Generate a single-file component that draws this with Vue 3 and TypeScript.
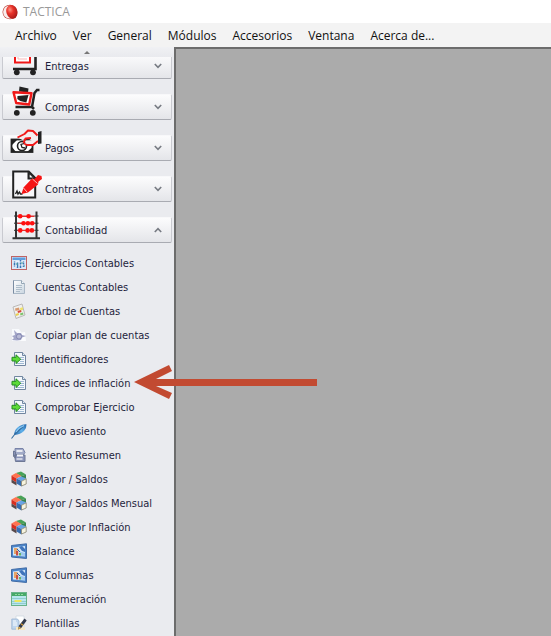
<script setup lang="ts">
interface Entry {
  label: string
  icon: string
}

const menus: string[] = ['Archivo', 'Ver', 'General', 'Módulos', 'Accesorios', 'Ventana', 'Acerca de...']

const groups: Entry[] = [
  { label: 'Entregas', icon: 'trolley' },
  { label: 'Compras', icon: 'cart' },
  { label: 'Pagos', icon: 'payment' },
  { label: 'Contratos', icon: 'contract' },
  { label: 'Contabilidad', icon: 'abacus' },
]

const openGroup = 'Contabilidad'

const items: Entry[] = [
  { label: 'Ejercicios Contables', icon: 'calendar' },
  { label: 'Cuentas Contables', icon: 'page' },
  { label: 'Arbol de Cuentas', icon: 'tree' },
  { label: 'Copiar plan de cuentas', icon: 'copy' },
  { label: 'Identificadores', icon: 'import' },
  { label: 'Índices de inflación', icon: 'import' },
  { label: 'Comprobar Ejercicio', icon: 'import' },
  { label: 'Nuevo asiento', icon: 'feather' },
  { label: 'Asiento Resumen', icon: 'summary' },
  { label: 'Mayor / Saldos', icon: 'books' },
  { label: 'Mayor / Saldos Mensual', icon: 'books' },
  { label: 'Ajuste por Inflación', icon: 'books' },
  { label: 'Balance', icon: 'chart' },
  { label: '8 Columnas', icon: 'chart' },
  { label: 'Renumeración', icon: 'grid' },
  { label: 'Plantillas', icon: 'template' },
]
</script>

<template>
  <div class="window">
    <svg class="defs" aria-hidden="true">
      <defs>
        <radialGradient id="ball" cx="0.4" cy="0.3" r="0.75">
          <stop offset="0" stop-color="#ff9080" />
          <stop offset="0.4" stop-color="#e8332a" />
          <stop offset="1" stop-color="#a01614" />
        </radialGradient>
        <linearGradient id="plume" x1="1" y1="0" x2="0" y2="1">
          <stop offset="0" stop-color="#2465a8" />
          <stop offset="0.5" stop-color="#5fb0ea" />
          <stop offset="1" stop-color="#2f6fb0" />
        </linearGradient>
        <linearGradient id="sheet" x1="0" y1="0" x2="1" y2="1">
          <stop offset="0" stop-color="#ffffff" />
          <stop offset="1" stop-color="#c9d5e0" />
        </linearGradient>
      </defs>

      <symbol id="trolley" viewBox="0 0 32 32">
        <rect x="5" y="3" width="15" height="15.500" fill="#fff" stroke="#f01818" stroke-width="2" />
        <path d="M8 6v9h9" fill="none" stroke="#f9b8b8" />
        <path d="M3 25h22.500V4" fill="none" stroke="#222" stroke-width="2.600" />
        <circle cx="6.800" cy="28.300" r="2.900" fill="#222" />
        <circle cx="23" cy="28.300" r="2.900" fill="#222" />
      </symbol>

      <symbol id="cart" viewBox="0 0 32 32">
        <path d="M9.500 1.500l9 2-.5 4-9-1z" fill="#222" />
        <path d="M29.500 5h-2.500l-2.500 3-2.500 14H5.500M22 22l2 2" fill="none" stroke="#222" stroke-width="2.500" />
        <path d="M3.500 7.200l18 1-2.300 11.300-13-1.500z" fill="#fff" stroke="#f01818" stroke-width="2.400" stroke-linejoin="round" />
        <path d="M7.500 11l11-1-2.200 7.500-6-1.500-3-2z" fill="#222" />
        <circle cx="6.800" cy="27.800" r="2.900" fill="#222" />
        <circle cx="22.800" cy="27.800" r="2.900" fill="#222" />
      </symbol>

      <symbol id="payment" viewBox="0 0 32 32">
        <rect x="1.500" y="13.500" width="21" height="12.500" fill="#fff" stroke="#222" stroke-width="1.800" />
        <path d="M2 14h5l-5 5zM22 26h-5l5-4.500zM2 21l4 5H2z" fill="#222" />
        <circle cx="12" cy="20" r="4.500" fill="#fff" stroke="#222" stroke-width="1.600" />
        <path d="M14 17.500l-3 1 1 3 3 .5" fill="none" stroke="#222" stroke-width="1.300" />
        <path d="M7.500 11.500l7-3 4-4 4.500 1 5 3.500v6l-4 3.500-7 .5-2.500-1.500 2-2.500 5-.5-3-2-6 1.500z" fill="#f4ecee" />
        <path d="M7.500 11.500l7-3.500 3.500-3.500 5 .5 4.500 4.500M13.500 17l2-4.500 5.500-.5M14 17.500l3 1.500h6l5-4" fill="none" stroke="#f01818" stroke-width="1.900" stroke-linejoin="round" />
        <path d="M28 6l3.500-1v12.500L28 18z" fill="#222" />
      </symbol>

      <symbol id="contract" viewBox="0 0 32 32">
        <path d="M3.200 4.500h15.500l6.500 6.500v19.500h-22z" fill="#f7f7f9" stroke="#222" stroke-width="2" />
        <path d="M17.500 4v8.500h8z" fill="#222" />
        <path d="M19.700 7.500v3h3z" fill="#fff" />
        <path d="M5.500 27l1.500-3 1 3 1.500-2 1 2h2" fill="none" stroke="#222" stroke-width="1.400" />
        <path d="M11.500 27l2-6.500 8.500-9 2.500.5 3.500-4 3.500 1 .5 3-3.500 2.500-.5 3-10 8z" fill="#f51414" />
        <path d="M22.500 12l5 4.500M13.500 21l3.500 4" stroke="#fff" stroke-width=".7" />
      </symbol>

      <symbol id="abacus" viewBox="0 0 32 32">
        <path d="M6 3.500V30M26.500 3.500V30M2.500 30.300H30" fill="none" stroke="#333" stroke-width="2" />
        <path d="M4 8h4M4 15.200h4M4 22.300h4M24.500 8h4M24.500 15.200h4M24.500 22.300h4" stroke="#333" />
        <path d="M7.500 8.200h17M7.500 15.300h17M7.500 22.400h17" stroke="#e03030" stroke-width="1.400" />
        <g fill="#ff1010">
          <circle cx="10.200" cy="8.200" r="2.300" /><circle cx="18.600" cy="8.200" r="2.300" />
          <circle cx="13.500" cy="15.300" r="2.300" /><circle cx="17.900" cy="15.300" r="2.300" /><circle cx="22.200" cy="15.300" r="2.300" />
          <circle cx="10.200" cy="22.400" r="2.300" /><circle cx="17.600" cy="22.400" r="2.300" /><circle cx="21.900" cy="22.400" r="2.300" />
        </g>
      </symbol>

      <symbol id="calendar" viewBox="0 0 16 16">
        <rect x=".5" y="1.500" width="15" height="13" fill="#dce9f8" stroke="#c06464" />
        <rect x="1.500" y="2.500" width="13" height="2.500" fill="#5f9ede" />
        <path d="M3.500 6v6M6.500 7v6M9.500 5v8M12.500 6v6" stroke="#3978b8" stroke-width="1.500" />
        <path d="M2 7h12M2 11h4M8 10h5" stroke="#fff" stroke-width=".8" />
        <path d="M5 9h2M10 8h2M13 11h1" stroke="#58a998" />
      </symbol>

      <symbol id="page" viewBox="0 0 16 16">
        <path d="M2.500 1.500h8l3 3v10h-11z" fill="url(#sheet)" stroke="#aab8c6" />
        <path d="M2.500 1.500v13" stroke="#7b8da3" />
        <path d="M10.500 1.500v3h3" fill="#f5fafd" stroke="#94a5b5" />
        <path d="M5 6.500h6M5 8.500h6M5 10.500h6M5 12.500h4" stroke="#aebdca" />
      </symbol>

      <symbol id="tree" viewBox="0 0 16 16">
        <path d="M2 4l9-3 3 11-9 3.500z" fill="#f0f0ee" stroke="#b5b2b0" stroke-width=".9" />
        <path d="M4 5.500l4-1 .5 2.500-4 1z" fill="#d89a70" />
        <path d="M9 5l3-.8v2.500l-2.500 1z" fill="#eee06a" />
        <path d="M6.500 8l3.500-1 .5 2-3.500 1z" fill="#d84840" />
        <path d="M4.500 11l3-1 .5 2-3 1z" fill="#e8cf50" />
        <path d="M9 10.500l3-1 .5 2-3 1z" fill="#7dc36e" />
      </symbol>

      <symbol id="copy" viewBox="0 0 16 16">
        <path d="M1 2h7l2 3v9H1z" fill="#f8fafd" />
        <path d="M8 6l6-1 1 9H5z" fill="#fafbfd" />
        <path d="M3 3l3 3h4l1 2 4 1-4 1.500-1 2.500-4 .5-5-.5 2-2-2-2 3-1z" fill="#a3a6c8" />
        <circle cx="8" cy="9.500" r="2.600" fill="#b9bbd6" stroke="#7f82ad" stroke-width=".9" />
      </symbol>

      <symbol id="import" viewBox="0 0 16 16">
        <path d="M3.500 1.500h8l3 3v10h-11z" fill="#f4f8fc" stroke="#7186a0" />
        <path d="M11.500 1.500v3h3" fill="#dce8f2" stroke="#7186a0" />
        <path d="M9 6.500h4M9 8.500h4M9 10.500h4M6 12.500h7" stroke="#9fb9d3" />
        <path d="M1 6.300h4v-2.500l4.700 4.400L5 12.600V10H1z" fill="#5ddb38" stroke="#238a20" />
      </symbol>

      <symbol id="feather" viewBox="0 0 16 16">
        <path d="M3 11Q4 5.500 8.500 3 12 .8 15.500 1.200 15.800 5 13 8 9.500 11.500 3.500 12z" fill="url(#plume)" />
        <path d="M.5 15.500L4 11l8-7.500" fill="none" stroke="#336a9b" stroke-width="1.100" />
        <path d="M5 9Q8 4.500 13 2.500" fill="none" stroke="#8fc8f0" stroke-width="1.200" />
      </symbol>

      <symbol id="summary" viewBox="0 0 16 16">
        <path d="M4 1.500h8l2 4-1.500 2H4z" fill="#a2abc8" stroke="#7883a8" />
        <path d="M5.500 4h6" stroke="#fff" stroke-width="1.500" />
        <path d="M2.500 4l2 1v6l-2-1.500zM3.500 8h10.500v6.500H4.500z" fill="#8993b8" stroke="#6e7895" />
        <path d="M6 7.500h6v2H6z" fill="#f7f7fb" /><path d="M5.500 12h6" stroke="#f3f3f6" stroke-width="1.300" />
      </symbol>

      <symbol id="books" viewBox="0 0 16 16">
        <path d="M5 2l5-1.500 5 3-5 2z" fill="#49a258" />
        <path d="M10 5.500l5-2v4l-5 2z" fill="#3a8450" />
        <path d="M.5 4.500l4.500-2.500 5.500 3-5 2.500z" fill="#ff7350" />
        <path d="M.5 4.500l5 3v4l-5-3z" fill="#d72e20" />
        <path d="M5.500 7.500l4.500-2 5.500 2-5 2.500z" fill="#69a4e5" />
        <path d="M5.500 7.500l5 2.500v5.500l-5-3z" fill="#376caf" />
        <path d="M.5 8.500l5 3v3l-5-3z" fill="#58494b" />
        <path d="M10.500 10.300l4.700-2.500V13l-4.700 2z" fill="#f7f4df" stroke="#75715d" stroke-width=".7" />
      </symbol>

      <symbol id="chart" viewBox="0 0 16 16">
        <path d="M.5 2.500L15.500.8v14.700L.5 14z" fill="#4c86ca" stroke="#426ca6" />
        <path d="M2 4.500l12-1.500v10.500L2 12.500z" fill="#d3e7fa" />
        <path d="M3 5h3.500v6H3z" fill="#e5a66a" /><path d="M8 4l3-1 3 3v3l-3-1z" fill="#3f74bb" />
        <path d="M9 8.500l5 1.500v3l-5-.5z" fill="#9cc8ef" /><path d="M5 8h2.200v4.500H5z" fill="#c94f42" />
        <path d="M8 10h2v2.500H8z" fill="#65b463" /><path d="M6 6l3 3" stroke="#315f9e" />
      </symbol>

      <symbol id="grid" viewBox="0 0 16 16">
        <rect x=".5" y="1.500" width="15" height="13" fill="#b8e6ed" stroke="#69b28a" />
        <rect x="1" y="2" width="14" height="3" fill="#46a968" />
        <path d="M1 7.500h14M1 10.500h14M1 12.500h14" stroke="#85c5c9" stroke-width=".8" />
        <path d="M4 3.500h9" stroke="#91d69e" stroke-dasharray="2 1" />
        <path d="M3.500 9h7v2h-7z" fill="#ece65a" />
      </symbol>

      <symbol id="template" viewBox="0 0 16 16">
        <path d="M5 1h8v11H5z" fill="#fff" stroke="#ccd5e0" stroke-width=".7" />
        <path d="M.8 4h5.700l1.500 2v8.200H.8z" fill="#c0d6ee" stroke="#97b2d0" stroke-width=".8" />
        <path d="M2 6h3M2 8h4M2 10h4" stroke="#f8fbff" />
        <path d="M5 12h9v3H5z" fill="#f7e8c6" />
        <path d="M7 14.500l1-4 5.500-7 2.200 2-5.500 7.500z" fill="#333b4d" />
        <path d="M7 14.500l1-3 2 1.500z" fill="#e5b14e" /><path d="M10 8.700l2 1.600" stroke="#d79c35" stroke-width="1.300" />
      </symbol>
    </svg>

    <header class="titlebar">
      <svg class="logo" viewBox="0 0 16 16" aria-hidden="true">
        <ellipse cx="8" cy="8" rx="7.500" ry="7.300" fill="#c04a40" />
        <ellipse cx="7.800" cy="8" rx="6.700" ry="6.600" fill="#f8eceb" />
        <ellipse cx="9.800" cy="7.900" rx="5.400" ry="7" fill="url(#ball)" transform="rotate(-18 9.800 7.900)" />
      </svg>
      <h1 class="title">TACTICA</h1>
    </header>

    <nav class="menubar" aria-label="Menú">
      <button v-for="menu in menus" :key="menu" type="button" class="menu">{{ menu }}</button>
    </nav>

    <div class="body">
      <aside class="sidebar">
        <button type="button" class="scroll-up" aria-label="Subir">
          <svg viewBox="0 0 6 3" aria-hidden="true"><path d="M0 3l3-3 3 3z" fill="#777" /></svg>
        </button>
        <div class="panel">
          <div class="groups">
            <button
              v-for="group in groups"
              :key="group.label"
              type="button"
              class="group"
              :aria-expanded="group.label === openGroup"
            >
              <svg class="group-icon" aria-hidden="true"><use :href="'#' + group.icon" /></svg>
              <span class="group-label">{{ group.label }}</span>
              <svg class="chevron" :class="{ open: group.label === openGroup }" viewBox="0 0 8 6" aria-hidden="true">
                <path d="M.8 1L4 4.400 7.200 1" fill="none" stroke="#777b83" stroke-width="1.600" />
              </svg>
            </button>
          </div>
          <ul class="items">
            <li v-for="item in items" :key="item.label">
              <a href="#" class="item">
                <svg class="item-icon" aria-hidden="true"><use :href="'#' + item.icon" /></svg>
                <span>{{ item.label }}</span>
              </a>
            </li>
          </ul>
        </div>
      </aside>
      <main class="workspace"></main>
    </div>

    <svg class="pointer" viewBox="0 0 184 36" aria-hidden="true">
      <path d="M0 18L35 1l3 6-16 8h161v7H22l16 7-3 6z" fill="#c24a31" />
    </svg>
  </div>
</template>

<style>
body {
  margin: 0;
}
</style>

<style scoped>
.window {
  position: relative;
  display: flex;
  flex-direction: column;
  height: 100vh;
  overflow: hidden;
  background: #fff;
  font-family: "DejaVu Sans Condensed", "Noto Sans", sans-serif;
  font-size: 11px;
  color: #1e1e3c;
}

.defs {
  position: absolute;
  width: 0;
  height: 0;
}

button {
  margin: 0;
  padding: 0;
  border: 0;
  background: none;
  color: inherit;
  font: inherit;
}

.titlebar {
  display: flex;
  flex: none;
  align-items: center;
  gap: 5px;
  height: 23px;
  padding-left: 2px;
}

.logo {
  width: 16px;
  height: 16px;
}

.title {
  margin: 0;
  font-family: "Open Sans", sans-serif;
  font-size: 12px;
  font-weight: 400;
  color: #999;
}

.menubar {
  display: flex;
  flex: none;
  align-items: center;
  gap: 16px;
  height: 24px;
  padding-left: 15px;
  background: #f3f3f3;
  font-family: "Open Sans", sans-serif;
  font-size: 12px;
  color: #111;
}

.menu {
  white-space: nowrap;
}

.body {
  display: flex;
  flex: 1;
  min-height: 0;
}

.sidebar {
  display: flex;
  flex: none;
  flex-direction: column;
  width: 174px;
  background: #eaebef;
}

.scroll-up {
  display: flex;
  flex: none;
  align-items: center;
  justify-content: center;
  height: 10px;
  background: linear-gradient(#f0f1f4, #e9eaee);
}

.scroll-up svg {
  width: 6px;
  height: 3px;
}

.panel {
  flex: 1;
  min-height: 0;
  overflow: hidden;
}

.groups {
  display: flex;
  flex-direction: column;
  gap: 15px;
  margin-top: -4px;
  padding: 0 2px;
}

.group {
  display: flex;
  align-items: center;
  gap: 3px;
  box-sizing: border-box;
  height: 26px;
  padding: 0 9px 0 7px;
  border: 1px solid #c9cad0;
  border-top-color: #f8f8fa;
  border-bottom-color: #a9abb2;
  border-radius: 2px;
  background: linear-gradient(#fcfcfd, #e4e5e9);
  text-align: left;
}

.group-icon {
  flex: none;
  width: 32px;
  height: 32px;
  margin-top: -12px;
}

.group-label {
  flex: 1;
}

.chevron {
  width: 8px;
  height: 6px;
}

.chevron.open {
  transform: rotate(180deg);
}

.items {
  margin: 0;
  padding: 8px 0 0;
  list-style: none;
}

.item {
  display: flex;
  align-items: center;
  gap: 8px;
  height: 24px;
  padding-left: 11px;
  color: inherit;
  text-decoration: none;
  white-space: nowrap;
}

.item-icon {
  width: 16px;
  height: 16px;
}

.workspace {
  flex: 1;
  border-top: 2px solid #6c6c6c;
  border-left: 2px solid #6c6c6c;
  background: #ababab;
}

/* Annotation arrow laid over the tree and the workspace */
.pointer {
  position: absolute;
  top: 364px;
  left: 134px;
  width: 184px;
  height: 36px;
}
</style>
